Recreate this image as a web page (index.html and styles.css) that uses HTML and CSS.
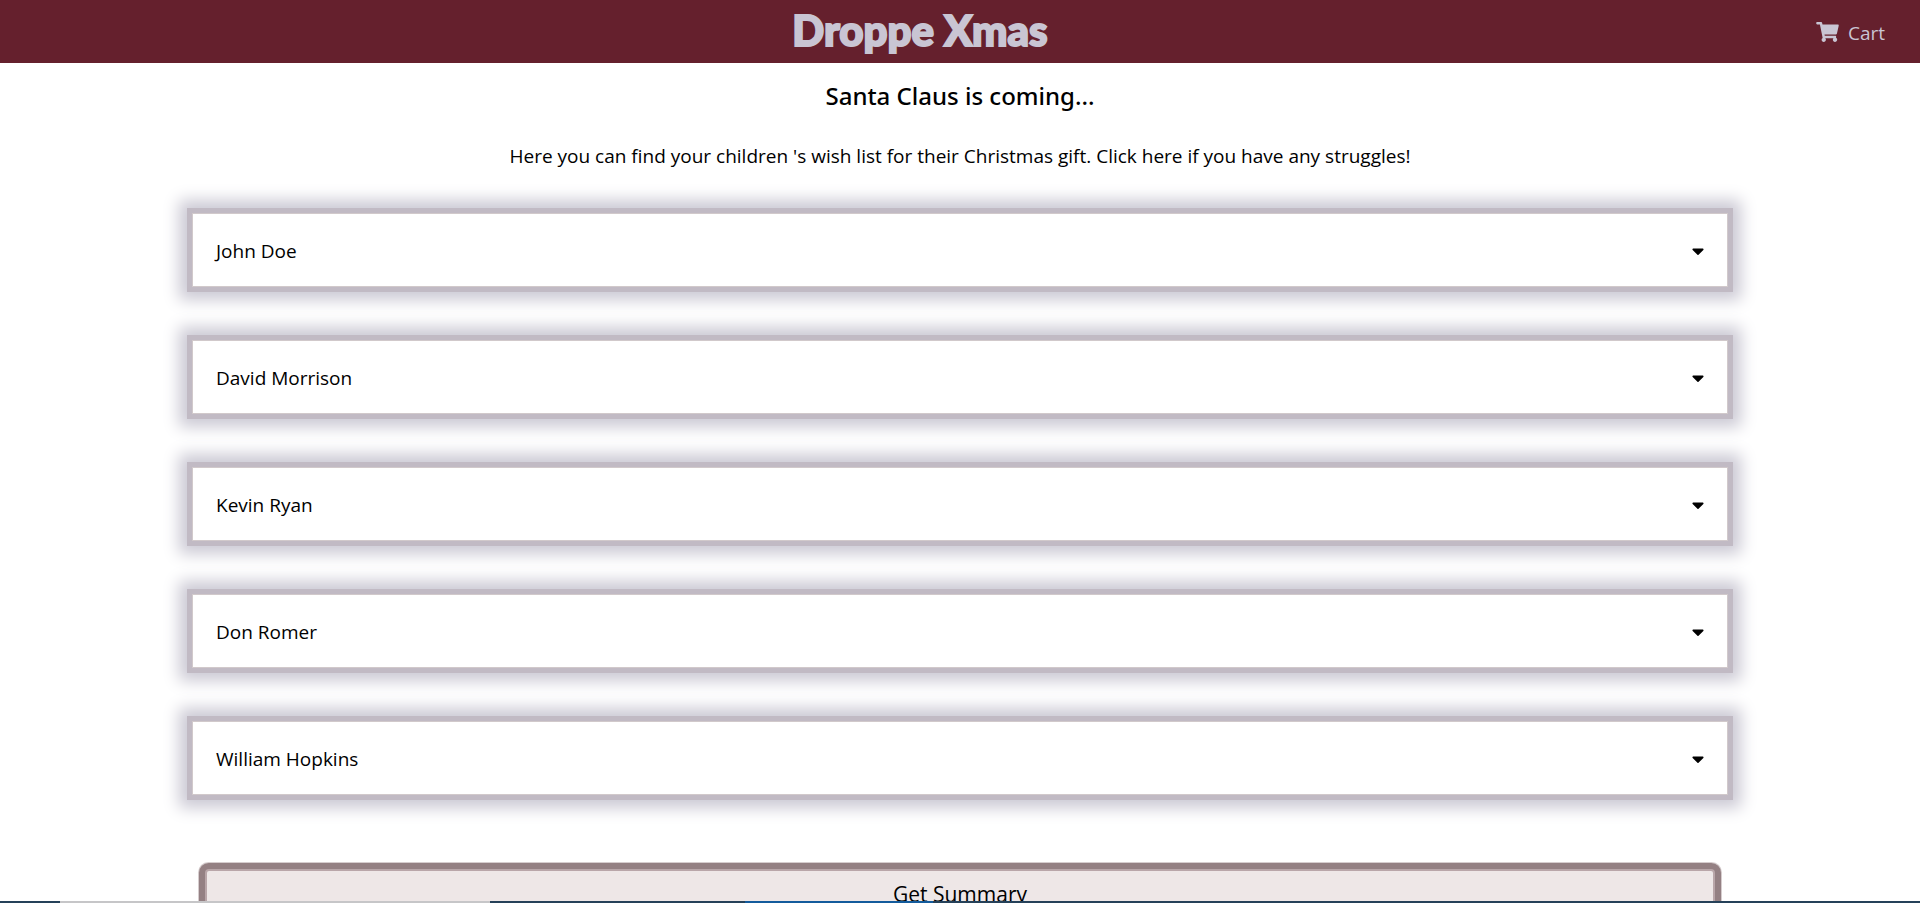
FILE: index.html
```html
<!DOCTYPE html>
<html lang="en">
<head>
<meta charset="utf-8">
<title>Droppe Xmas</title>
<link rel="stylesheet" href="styles.css">
</head>
<body>
<header class="navbar">
  <a class="logo" href="#">Droppe Xmas</a>
  <a class="cart" href="#cart">
    <svg class="cart-icon" viewBox="0 0 576 512" aria-hidden="true"><path d="M528.12 301.319l47.273-208C578.806 78.301 567.391 64 551.99 64H159.208l-9.166-44.81C147.758 8.021 137.93 0 126.529 0H24C10.745 0 0 10.745 0 24v16c0 13.255 10.745 24 24 24h69.883l70.248 343.435C147.325 417.1 136 435.222 136 456c0 30.928 25.072 56 56 56s56-25.072 56-56c0-15.674-6.447-29.835-16.824-40h209.647C430.447 426.165 424 440.326 424 456c0 30.928 25.072 56 56 56s56-25.072 56-56c0-22.172-12.888-41.332-31.579-50.405l5.517-24.276c3.413-15.018-8.002-29.319-23.403-29.319H218.117l-6.545-32h293.145c11.206 0 20.92-7.754 23.403-18.681z"/></svg>
    <span>Cart</span>
  </a>
</header>
<main class="page">
  <h1 class="title">Santa Claus is coming...</h1>
  <p class="intro">Here you can find your children 's wish list for their Christmas gift. <a class="help" href="#help">Click here if you have any struggles!</a></p>
  <div class="wishlists">
    <button class="child" type="button"><span>John Doe</span><svg class="caret" viewBox="0 0 320 512" aria-hidden="true"><path d="M31.3 192h257.3c17.8 0 26.7 21.5 14.1 34.1L174.1 354.8c-7.8 7.8-20.5 7.8-28.3 0L17.2 226.1C4.6 213.5 13.5 192 31.3 192z"/></svg></button>
    <button class="child" type="button"><span>David Morrison</span><svg class="caret" viewBox="0 0 320 512" aria-hidden="true"><path d="M31.3 192h257.3c17.8 0 26.7 21.5 14.1 34.1L174.1 354.8c-7.8 7.8-20.5 7.8-28.3 0L17.2 226.1C4.6 213.5 13.5 192 31.3 192z"/></svg></button>
    <button class="child" type="button"><span>Kevin Ryan</span><svg class="caret" viewBox="0 0 320 512" aria-hidden="true"><path d="M31.3 192h257.3c17.8 0 26.7 21.5 14.1 34.1L174.1 354.8c-7.8 7.8-20.5 7.8-28.3 0L17.2 226.1C4.6 213.5 13.5 192 31.3 192z"/></svg></button>
    <button class="child" type="button"><span>Don Romer</span><svg class="caret" viewBox="0 0 320 512" aria-hidden="true"><path d="M31.3 192h257.3c17.8 0 26.7 21.5 14.1 34.1L174.1 354.8c-7.8 7.8-20.5 7.8-28.3 0L17.2 226.1C4.6 213.5 13.5 192 31.3 192z"/></svg></button>
    <button class="child" type="button"><span>William Hopkins</span><svg class="caret" viewBox="0 0 320 512" aria-hidden="true"><path d="M31.3 192h257.3c17.8 0 26.7 21.5 14.1 34.1L174.1 354.8c-7.8 7.8-20.5 7.8-28.3 0L17.2 226.1C4.6 213.5 13.5 192 31.3 192z"/></svg></button>
  </div>
  <button class="summary" type="button">Get Summary</button>
</main>
<div class="taskbar"></div>
</body>
</html>
```
FILE: styles.css
```css
* {
  box-sizing: border-box;
}

body {
  margin: 0;
  height: 100vh;
  overflow: hidden;
  background: #fff;
  color: #000;
  font-family: "Open Sans", "Noto Sans", sans-serif;
  font-size: 19px;
  line-height: 28px;
}

a {
  color: inherit;
  text-decoration: none;
}

button {
  font: inherit;
  color: inherit;
  cursor: pointer;
}

.navbar {
  display: flex;
  align-items: center;
  height: 63px;
  padding: 0 35px 0 24px;
  background: #65202d;
  color: #c9c5d3;
}

.logo {
  margin: 0 auto;
  padding-bottom: 4px;
  font-family: Lato, sans-serif;
  font-size: 42px;
  font-weight: 900;
  line-height: 56px;
  -webkit-text-stroke: 2px #c9c5d3;
}

.cart {
  display: flex;
  align-items: center;
  gap: 9px;
  padding-top: 2px;
}

.cart-icon {
  width: 23px;
  height: 20px;
  margin-bottom: 2px;
  fill: currentColor;
}

.page {
  display: flex;
  flex-direction: column;
  align-items: center;
  padding-top: 16px;
}

.title {
  margin: 0;
  font-family: "Noto Sans", "Open Sans", sans-serif;
  font-size: 24px;
  font-weight: 500;
  line-height: 34px;
}

.intro {
  margin: 29px 0 43px;
}

.wishlists {
  display: flex;
  flex-direction: column;
  gap: 53px;
  width: 80%;
}

.child {
  display: flex;
  align-items: center;
  justify-content: space-between;
  padding: 23px 23px 21px 23px;
  border: 1px solid #d1c9cb;
  background: #fff;
  box-shadow: 0 0 0 5px #c1bac4, 0 0 15px 13px #cbc9d4;
}

.caret {
  width: 12px;
  height: 20px;
}

.summary {
  width: calc(80% - 26px);
  margin-top: 74px;
  padding: 9px;
  border: 2px solid #b9a6a9;
  border-radius: 4px;
  background: #eee7e7;
  font-size: 21px;
  box-shadow: 0 0 0 6px #948083, 0 0 0 7px #d6cdce;
}

.taskbar {
  position: fixed;
  right: 0;
  bottom: 0;
  left: 0;
  height: 2px;
  background: linear-gradient(90deg, #254159 60px, #c6c6c8 60px 490px, #254159 490px 745px, #135b9c 745px 933px, #254159 933px);
}
```
